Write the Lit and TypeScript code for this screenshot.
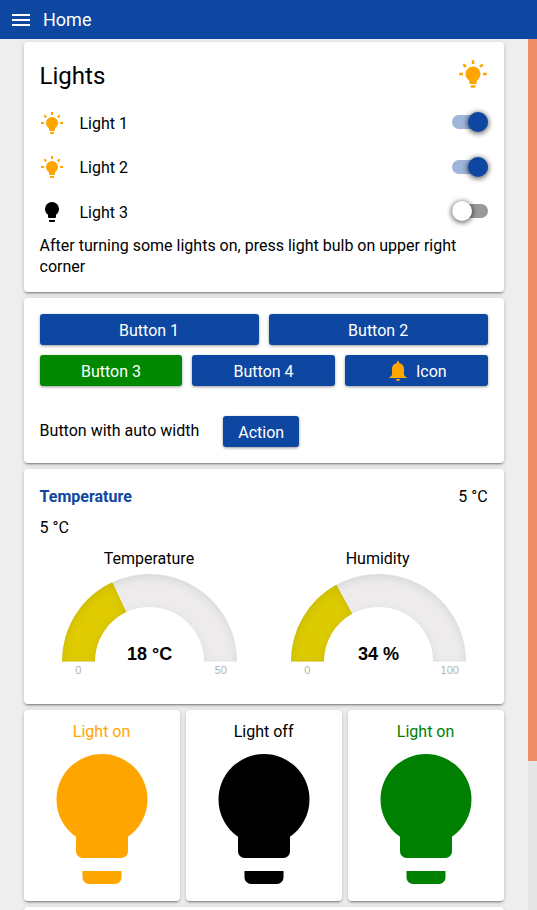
import { LitElement, html, css, svg } from "lit";
import { customElement, property } from "lit/decorators.js";
import { classMap } from "lit/directives/class-map.js";

const ICONS: Record<string, string> = {
  menu: "M3,6H21V8H3V6M3,11H21V13H3V11M3,16H21V18H3V16Z",
  bulb: "M12,2A7,7 0 0,0 5,9C5,11.38 6.19,13.47 8,14.74V17A1,1 0 0,0 9,18H15A1,1 0 0,0 16,17V14.74C17.81,13.47 19,11.38 19,9A7,7 0 0,0 12,2M9,21A1,1 0 0,0 10,22H14A1,1 0 0,0 15,21V20H9V21Z",
  bulbOn:
    "M12,6A6,6 0 0,1 18,12C18,14.22 16.79,16.16 15,17.2V19A1,1 0 0,1 14,20H10A1,1 0 0,1 9,19V17.2C7.21,16.16 6,14.22 6,12A6,6 0 0,1 12,6M14,21V22A1,1 0 0,1 13,23H11A1,1 0 0,1 10,22V21H14M20,11H23V13H20V11M1,11H4V13H1V11M13,1V4H11V1H13M4.92,3.5L7.05,5.64L5.63,7.05L3.5,4.93L4.92,3.5M16.95,5.63L19.07,3.5L20.5,4.93L18.37,7.05L16.95,5.63Z",
  bell: "M14,20A2,2 0 0,1 12,22A2,2 0 0,1 10,20H14M12,2A1,1 0 0,1 13,3V4.08C15.84,4.56 18,7.03 18,10V16L21,19H3L6,16V10C6,7.03 8.16,4.56 11,4.08V3A1,1 0 0,1 12,2Z",
};

@customElement("md-icon")
export class MdIcon extends LitElement {
  @property() name = "bulb";
  static styles = css`
    :host { display: block; width: 24px; height: 24px; flex: none; }
    svg { display: block; width: 100%; height: 100%; fill: currentColor; }
  `;
  render() {
    return html`<svg viewBox="0 0 24 24"><path d=${ICONS[this.name]}></path></svg>`;
  }
}

@customElement("toggle-switch")
export class ToggleSwitch extends LitElement {
  @property({ type: Boolean }) on = false;
  static styles = css`
    :host { display: block; width: 36px; height: 20px; }
    .track { display: flex; align-items: center; width: 36px; height: 14px; margin-top: 3px; border-radius: 7px; background: #999; }
    .knob { width: 20px; height: 20px; flex: none; border-radius: 50%; background: #fff; box-shadow: 0 1px 5px 1px rgba(0, 0, 0, 0.55); }
    .on { background: #9fb5da; justify-content: flex-end; }
    .on .knob { background: #0d47a1; }
  `;
  render() {
    return html`<div class=${classMap({ track: true, on: this.on })}><div class="knob"></div></div>`;
  }
}

@customElement("half-gauge")
export class HalfGauge extends LitElement {
  @property() label = "";
  @property() unit = "";
  @property() color = "";
  @property({ type: Number }) value = 0;
  @property({ type: Number }) max = 100;
  static styles = css`
    :host { display: flex; flex-direction: column; align-items: center; }
    .label { line-height: 21px; }
    svg { display: block; width: 200px; height: 116px; }
    .value { font: bold 19px "Liberation Sans", Arial, sans-serif; fill: #000; }
    .limit { font: 11px "Liberation Sans", Arial, sans-serif; fill: #b3b3b3; }
    .rest { fill: #edebeb; }
  `;
  private arc(fraction: number) {
    const outer = 87.5, inner = 54.6, cx = 100.5, cy = 92.5;
    const a = Math.PI * (1 - fraction);
    const p = (r: number) => `${cx + r * Math.cos(a)},${cy - r * Math.sin(a)}`;
    return `M${cx - inner},${cy}L${cx - outer},${cy}A${outer},${outer} 0 0 1 ${p(outer)}L${p(inner)}A${inner},${inner} 0 0 0 ${cx - inner},${cy}Z`;
  }
  render() {
    return html`
      <div class="label">${this.label}</div>
      <svg viewBox="0 0 200 116">
        ${svg`
          <defs>
            <filter id="inner">
              <feOffset dx="0" dy="3"></feOffset>
              <feGaussianBlur stdDeviation="5" result="blurred"></feGaussianBlur>
              <feComposite operator="out" in="SourceGraphic" in2="blurred" result="inverse"></feComposite>
              <feFlood flood-color="black" flood-opacity="0.2" result="tone"></feFlood>
              <feComposite operator="in" in="tone" in2="inverse" result="shade"></feComposite>
              <feComposite operator="over" in="shade" in2="SourceGraphic"></feComposite>
            </filter>
          </defs>
          <path class="rest" filter="url(#inner)" d=${this.arc(1)}></path>
          <path fill=${this.color} filter="url(#inner)" d=${this.arc(this.value / this.max)}></path>
          <text class="value" text-anchor="middle" x="100.6" y="90.9" textLength=${this.unit === "%" ? 41.2 : 45.2} lengthAdjust="spacingAndGlyphs">${this.value} ${this.unit}</text>
          <text class="limit" text-anchor="middle" x="29.4" y="105">0</text>
          <text class="limit" text-anchor="middle" x="171.8" y="105">${this.max}</text>
        `}
      </svg>
    `;
  }
}

@customElement("app-root")
export class AppRoot extends LitElement {
  static styles = css`
    :host { display: flex; flex-direction: column; height: 910px; overflow: hidden; background: #eee; color: #000; font: 16px/21px Roboto, sans-serif; }
    * { box-sizing: border-box; }
    .bar { display: flex; align-items: center; gap: 10px; height: 39px; flex: none; padding-left: 9px; background: #0d47a1; color: #fff; font-size: 18px; }
    .body { display: flex; flex: 1; min-height: 0; }
    .content { flex: 1; display: flex; flex-direction: column; gap: 6px; padding: 3px 24.4px 0 23.6px; min-width: 0; }
    .scroll { width: 9px; background: #e5e5e5; }
    .thumb { height: 722px; background: #ef8d67; }
    .card { flex: none; padding: 16px; border-radius: 4px; background: #fff; box-shadow: 0 2px 2px 0 rgba(0, 0, 0, 0.16), 0 3px 1px -2px rgba(0, 0, 0, 0.22), 0 1px 5px 0 rgba(0, 0, 0, 0.14); }
    .lights { height: 250px; }
    .head { display: flex; justify-content: space-between; height: 36px; font-size: 24px; line-height: 36px; }
    .head md-icon { width: 30px; height: 30px; margin-top: 1px; }
    .amber { color: #ffa500; }
    .green { color: #008000; }
    .rows { padding-top: 16px; }
    .row { display: flex; height: 44.4px; }
    .row span { flex: 1; padding: 3px 0 0 15.9px; }
    .row md-icon { margin-top: 1px; }
    .row toggle-switch { margin-top: 2.4px; }
    .note { margin: -8px 0 0; }
    .buttons { height: 165px; display: flex; flex-direction: column; }
    .line { display: flex; gap: 10px; margin-bottom: 10px; }
    .btn { display: flex; align-items: center; justify-content: center; gap: 6px; flex: 1; height: 31px; padding-top: 1px; border-radius: 3px; background: #0d47a1; color: #fff; box-shadow: 0 1px 3px rgba(0, 0, 0, 0.4); }
    .btn md-icon { margin-top: -1px; }
    .ok { background: #008800; }
    .auto { display: flex; align-items: center; gap: 24px; margin-top: 20px; }
    .auto span { margin-top: -3px; }
    .auto .btn { flex: none; width: 76px; }
    .climate { height: 235px; padding-top: 17px; }
    .reading { display: flex; justify-content: space-between; margin-bottom: 10px; }
    .name { color: #0d47a1; font-weight: 700; }
    .gauges { display: grid; grid-template-columns: 218.7px 218.7px; gap: 10px; margin-top: 10px; }
    .tiles { display: grid; grid-template-columns: repeat(3, 1fr); gap: 6px; flex: none; }
    .tile { height: 191px; padding: 11px 0 0; display: flex; flex-direction: column; align-items: center; }
    .tile md-icon { width: 156px; height: 156px; margin-top: -1px; }
  `;

  private lights = [true, true, false];
  private tiles = [
    { tone: "amber", text: "Light on" },
    { tone: "", text: "Light off" },
    { tone: "green", text: "Light on" },
  ];

  render() {
    return html`
      <header class="bar"><md-icon name="menu"></md-icon><span>Home</span></header>
      <div class="body">
        <main class="content">
          <section class="card lights">
            <div class="head"><span>Lights</span><md-icon class="amber" name="bulbOn"></md-icon></div>
            <div class="rows">
              ${this.lights.map(
                (on, i) => html`<div class="row">
                  <md-icon class=${on ? "amber" : ""} name=${on ? "bulbOn" : "bulb"}></md-icon>
                  <span>Light ${i + 1}</span>
                  <toggle-switch ?on=${on}></toggle-switch>
                </div>`
              )}
            </div>
            <p class="note">After turning some lights on, press light bulb on upper right corner</p>
          </section>

          <section class="card buttons">
            <div class="line"><div class="btn">Button 1</div><div class="btn">Button 2</div></div>
            <div class="line">
              <div class="btn ok">Button 3</div>
              <div class="btn">Button 4</div>
              <div class="btn"><md-icon class="amber" name="bell"></md-icon>Icon</div>
            </div>
            <div class="auto"><span>Button with auto width</span><div class="btn">Action</div></div>
          </section>

          <section class="card climate">
            <div class="reading"><span class="name">Temperature</span><span>5 °C</span></div>
            <div>5 °C</div>
            <div class="gauges">
              <half-gauge label="Temperature" unit="°C" color="#e0cb00" value="18" max="50"></half-gauge>
              <half-gauge label="Humidity" unit="%" color="#dccb00" value="34" max="100"></half-gauge>
            </div>
          </section>

          <div class="tiles">
            ${this.tiles.map(
              (t) => html`<section class="card tile ${t.tone}">${t.text}<md-icon name="bulb"></md-icon></section>`
            )}
          </div>
          <section class="card"></section>
        </main>
        <div class="scroll"><div class="thumb"></div></div>
      </div>
    `;
  }
}
